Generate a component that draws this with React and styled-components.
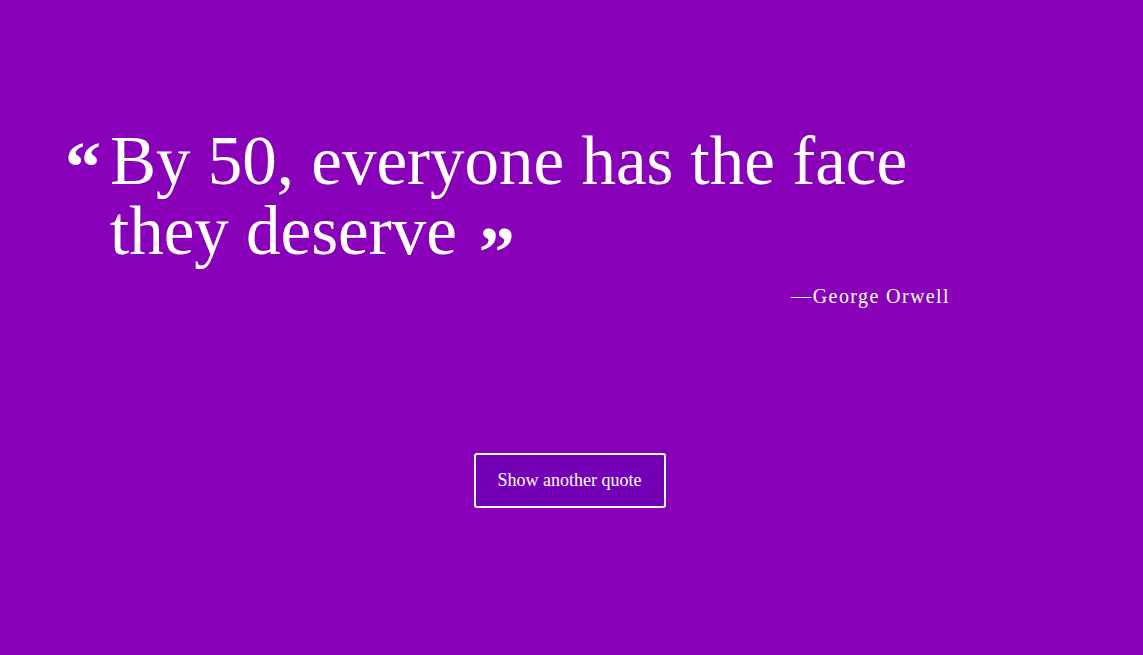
import React from "react";
import styled, { createGlobalStyle } from "styled-components";

const Global = createGlobalStyle`
  html, body { margin: 0; padding: 0; }
  body { background: #8800b8; font-family: "Liberation Serif", "DejaVu Serif", serif; color: #fff; }
`;

const Page = styled.main`
  min-height: 100vh;
  background: #8800b8;
  display: flex;
  flex-direction: column;
  padding: 126px 0 0 65px;
  box-sizing: border-box;
`;

const QuoteBox = styled.section`
  width: 885px;
  display: flex;
  flex-direction: column;
`;

const QuoteRow = styled.div`
  display: flex;
  align-items: flex-start;
`;

const Mark = styled.span`
  font-family: "Liberation Serif", serif;
  font-weight: 700;
  font-size: ${(p) => p.$size}px;
  display: inline-block;
  ${(p) =>
    p.$open
      ? "line-height: 1; margin: 5px 9px 0 0;"
      : "line-height: 0; margin-left: 22px; vertical-align: -22px;"}
`;

const QuoteText = styled.blockquote`
  margin: 0;
  font-size: 69px;
  line-height: 70px;
  font-weight: 400;
`;

const Author = styled.p`
  margin: 19px 0 0;
  text-align: right;
  font-size: 20px;
  letter-spacing: 1.4px;
`;

const ButtonRow = styled.div`
  display: flex;
  justify-content: center;
  margin: 145px 0 0 -69px;
`;

const Button = styled.button`
  width: 192px;
  height: 55px;
  background: #7400b6;
  color: #fff;
  border: 2px solid #fff;
  border-radius: 3px;
  font-family: "Liberation Serif", serif;
  font-size: 18px;
  cursor: pointer;
`;

export default function App() {
  return (
    <>
      <Global />
      <Page>
        <QuoteBox>
          <QuoteRow>
            <Mark $open $size={72}>“</Mark>
            <QuoteText>
              By 50, everyone has the face they deserve
              <Mark $size={72}>”</Mark>
            </QuoteText>
          </QuoteRow>
          <Author>—George Orwell</Author>
        </QuoteBox>
        <ButtonRow>
          <Button>Show another quote</Button>
        </ButtonRow>
      </Page>
    </>
  );
}
